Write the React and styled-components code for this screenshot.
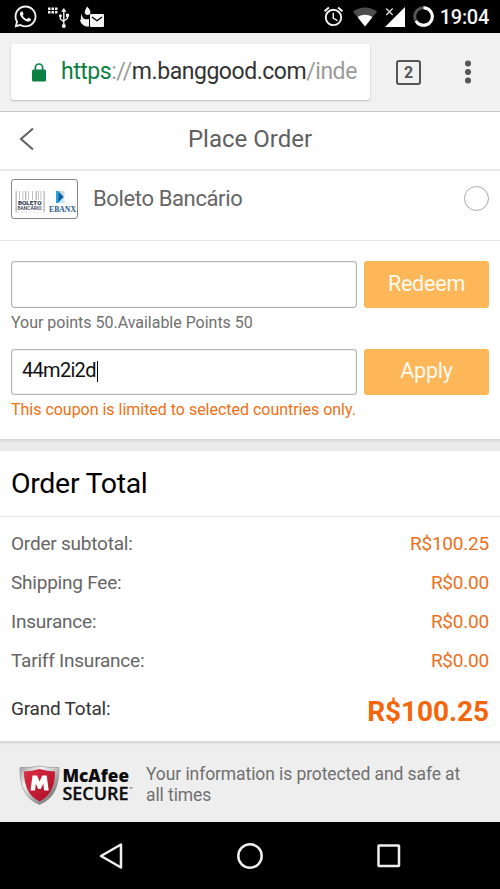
import React from 'react'
import styled, { createGlobalStyle, css } from 'styled-components'
import { FaWhatsapp } from 'react-icons/fa'
import { MdAlarm } from 'react-icons/md'

const GlobalStyle = createGlobalStyle`
  * {
    box-sizing: border-box;
  }
  body {
    margin: 0;
    background: #000;
    font-family: Roboto, sans-serif;
    color: #666;
  }
  svg {
    display: block;
    flex-shrink: 0;
  }
`
const Screen = styled.div`
  width: 500px;
  height: 889px;
  overflow: hidden;
  display: flex;
  flex-direction: column;
`
const bar = css`
  display: flex;
  align-items: center;
  flex-shrink: 0;
`

const StatusBar = styled.div`
  ${bar}
  height: 33px;
  padding: 0 11px 0 13px;
  background: #000;
  color: #f4f4f4;
`
const StatusIcon = styled.span`
  display: flex;
  margin-left: ${p => p.$gap || 0}px;
`
const Clock = styled.span`
  margin-left: auto;
  padding-top: 2px;
  font-size: 20px;
  font-weight: 500;
  line-height: 31px;
  letter-spacing: -0.3px;
`

const BrowserBar = styled.div`
  ${bar}
  height: 79px;
  padding: 0 11px;
  background: #f1f1f1;
  border-bottom: 1px solid #c6c6c6;
`
const AddressBox = styled.div`
  ${bar}
  width: 359px;
  height: 56px;
  padding-left: 21px;
  background: #fff;
  border-radius: 3px;
  box-shadow: 0 1px 2px rgba(0, 0, 0, 0.22);
`
const Url = styled.span`
  margin-left: 15px;
  font-size: 23px;
  line-height: 30px;
  letter-spacing: -0.46px;
  white-space: nowrap;
  color: #9a9a9a;

  b {
    font-weight: 400;
    color: #333;
  }
  i {
    font-style: normal;
    color: #0b8043;
  }
`
const TabCount = styled.div`
  width: 25px;
  height: 25px;
  margin-left: 26px;
  border: 2px solid #555;
  border-radius: 3px;
  font-size: 16px;
  font-weight: 700;
  line-height: 22px;
  text-align: center;
  color: #555;
`
const MenuDots = styled.svg`
  margin-left: 44px;
`

const PageHeader = styled.header`
  display: grid;
  grid-template-columns: 40px auto 40px;
  align-items: center;
  flex-shrink: 0;
  height: 59px;
  padding: 0 10px 3px;
  background: #fff;
  border-bottom: 2px solid #e9e9e9;
`
const BackIcon = styled.svg`
  margin-left: 8px;
`
const Title = styled.h1`
  margin: 0;
  font-size: 24px;
  font-weight: 400;
  line-height: 28px;
  text-align: center;
  color: #606060;
`

const Method = styled.div`
  display: flex;
  align-items: flex-start;
  flex-shrink: 0;
  height: 70px;
  padding: 8px 11px 0;
  background: #fff;
  border-bottom: 1px solid #e6e6e6;
`
const MethodLogo = styled.div`
  width: 67px;
  height: 40px;
  border: 1px solid #858585;
  border-radius: 3px;
`
const MethodName = styled.span`
  margin: 6px auto 0 15px;
  font-size: 22px;
  line-height: 28px;
  letter-spacing: -0.37px;
`
const Radio = styled.span`
  width: 25px;
  height: 25px;
  margin-top: 7px;
  border: 1px solid #aaa;
  border-radius: 50%;
`

const Form = styled.section`
  flex-shrink: 0;
  height: 198px;
  padding: 20px 11px 0;
  background: #fff;
`
const Field = styled.div`
  display: grid;
  grid-template-columns: 346px 125px;
  gap: 7px;
  height: ${p => p.$height}px;
`
const Input = styled.div`
  ${bar}
  padding: 0 0 4px 10px;
  border: 1px solid #b0b0b0;
  border-radius: 3px;
  box-shadow: inset 0 0 1px #999;
  font-size: 20px;
  letter-spacing: -0.7px;
  color: #111;
`
const Caret = styled.span`
  width: 1px;
  height: 21px;
  margin: 3px 0 0 1px;
  background: #000;
`
const Button = styled.div`
  ${bar}
  justify-content: center;
  padding-bottom: 3px;
  border-radius: 3px;
  background: #fdb759;
  font-size: 21.5px;
  letter-spacing: -0.2px;
  color: #fffaf0;
`
const Hint = styled.p`
  margin: ${p => p.$warn ? '5px 0 0' : '5px 0 16px'};
  font-size: 16px;
  line-height: 20px;
  letter-spacing: -0.02px;
  color: ${p => p.$warn ? '#f07014' : '#707070'};
`

const Divider = styled.div`
  flex-shrink: 0;
  height: 12px;
  background: linear-gradient(#d4d4d4, #ebebeb 4px);
`
const Heading = styled.h2`
  flex-shrink: 0;
  height: 66px;
  margin: 0;
  padding: 0 11px;
  border-bottom: 1px solid #e6e6e6;
  background: #fff;
  font-size: 28.5px;
  font-weight: 400;
  line-height: 65px;
  letter-spacing: -0.32px;
  color: #000;
`
const Totals = styled.section`
  flex-shrink: 0;
  height: 224px;
  padding: 7px 11px 0;
  background: #fff;
`
const Row = styled.div`
  display: flex;
  justify-content: space-between;
  align-items: center;
  height: 39px;
  font-size: 19px;
  letter-spacing: -0.22px;
`
const Price = styled.span`
  color: #ec701d;
`
const GrandRow = styled(Row)`
  height: 61px;
  padding-bottom: 4px;
  color: #333;

  ${Price} {
    padding-top: 5px;
    font-size: 28px;
    font-weight: 700;
    letter-spacing: -0.08px;
    color: #f5650c;
  }
`

const Footer = styled.footer`
  display: flex;
  flex-shrink: 0;
  height: 81px;
  padding: 0 20px 0 19px;
  background: linear-gradient(#d4d4d4, #eee 4px);
`
const FooterText = styled.p`
  width: 330px;
  margin: 23px 0 0 11px;
  font-size: 17.5px;
  line-height: 21px;
  letter-spacing: -0.09px;
  color: #707070;
`
const McAfee = styled.svg`
  margin-top: 22px;
`

const NavBar = styled.nav`
  ${bar}
  justify-content: space-between;
  height: 67px;
  padding: 0 98px;
  background: #000;
`

const rows = [
  ['Order subtotal:', 'R$100.25'],
  ['Shipping Fee:', 'R$0.00'],
  ['Insurance:', 'R$0.00'],
  ['Tariff Insurance:', 'R$0.00'],
]

const barcode = [15.5, 19, 22.5, 25, 28, 32, 35.5, 38, 40.5, 43.5]

const UsbIcon = () => (
  <svg width="22" height="23" viewBox="48 5 22 23" fill="#f4f4f4">
    {[48, 51.5, 55].map(x => [7.5, 11].map(y => (
      <rect key={x + '-' + y} x={x} y={y} width="2.5" height="2.5" />
    )))}
    <path d="M63.8 8l2.6 3.8h-5.2z" />
    <circle cx="63.8" cy="26" r="2" />
    <circle cx="60.4" cy="15.7" r="1.5" />
    <rect x="66" y="13.8" width="3" height="3" />
    <path d="M63.8 11v14M60.4 16v3l3.4 2.6M67.5 16v2.2l-3.7 2.8" fill="none" stroke="#f4f4f4" strokeWidth="1.4" />
  </svg>
)

const MailIcon = () => (
  <svg width="24" height="22" viewBox="80 6 24 22" fill="#f4f4f4">
    <path d="M87 6.500c2.500 2.200 4.200 4.500 3.200 7-.8 1.800-3.800 2-5 .2-1.200-2 .3-4 1.800-7.200z" />
    <path d="M81.500 13.500c.5 5 3 6.500 7.500 5.500v7.500c-5 .5-9-3-9-7.500 .6 1 1 1.200 1.300.9-.6-2-.5-4 .2-6.400z" />
    <rect x="90" y="14" width="14" height="13" rx="1" />
    <path d="M92 17l5 3.700 5-3.700" fill="none" stroke="#000" strokeWidth="1.4" />
  </svg>
)

const WifiIcon = () => (
  <svg width="24" height="20" viewBox="0 0 24 20">
    <path d="M0 4.500Q12-3.500 24 4.500L12 19.500z" fill="#4d4d4d" />
    <path d="M4.500 10Q12 5.500 19.500 10L12 19.500z" fill="#fff" />
  </svg>
)

const SignalIcon = () => (
  <svg width="21" height="20" viewBox="0 0 21 20">
    <path d="M20 0v20H0z" fill="#fff" />
    <path d="M0 0h10v9H0z" fill="#000" />
    <path d="M1.200 1.500l6.500 6.500M7.700 1.500L1.200 8" stroke="#ddd" strokeWidth="1.3" />
  </svg>
)

const BatteryIcon = () => (
  <svg width="21" height="21" viewBox="0 0 21 21" fill="none" strokeWidth="3">
    <circle cx="10.5" cy="10.5" r="8.8" stroke="#555" />
    <path d="M10.500 1.700a8.800 8.800 0 1 1-7.600 13.200" stroke="#fff" />
  </svg>
)

const LockIcon = () => (
  <svg width="14" height="19" viewBox="0 0 14 19">
    <rect y="6.5" width="14" height="12" rx="1.5" fill="#0b8043" />
    <path d="M3.400 7V4.600a3.600 3.600 0 0 1 7.200 0V7" fill="none" stroke="#0b8043" strokeWidth="1.7" />
  </svg>
)

const BoletoLogo = () => (
  <svg width="65" height="38" viewBox="12 180 65 38">
    {barcode.map((x, i) => (
      <rect key={x} x={x} y="191" width={i % 3 ? 0.8 : 1.3} height={i === 0 || i === 9 ? 21.5 : 9} fill="#b5b5ba" />
    ))}
    <g fontFamily="Roboto, sans-serif" fill="#34364d">
      <text x="18" y="205" fontSize="5.8" fontWeight="900" textLength="23.5" lengthAdjust="spacingAndGlyphs">BOLETO</text>
      <text x="17.5" y="210.3" fontSize="4.6" fontWeight="500" textLength="24" lengthAdjust="spacingAndGlyphs">BANCÁRIO</text>
    </g>
    <path d="M18 212h23" stroke="#c4c4c8" strokeWidth="1.2" strokeDasharray="1 3" />
    <path d="M56 191h3l5 6-5 6h-3z" fill="#28a5d8" />
    <path d="M59 191h5.500v6z" fill="#cfd4d8" />
    <path d="M58.500 203l5-6 1.500 6z" fill="#c9e5ee" />
    <path d="M58.500 192.500l5 4.500-5 4.500z" fill="#155a99" />
    <text x="49" y="211.5" fontFamily="Liberation Serif, serif" fontSize="8.8" fontWeight="700" fill="#2a5a90" textLength="27" lengthAdjust="spacingAndGlyphs">EBANX</text>
  </svg>
)

const McAfeeLogo = () => (
  <McAfee width="116" height="44" viewBox="19 763 116 44">
    <defs>
      <linearGradient id="rim" x1="0" y1="0" x2="1" y2="1">
        <stop offset="0" stopColor="#999" />
        <stop offset="0.3" stopColor="#f4f4f4" />
        <stop offset="0.6" stopColor="#aaa" />
        <stop offset="1" stopColor="#555" />
      </linearGradient>
      <linearGradient id="shield" x1="0" y1="0" x2="1" y2="1">
        <stop offset="0" stopColor="#dc3045" />
        <stop offset="1" stopColor="#ab0a25" />
      </linearGradient>
    </defs>
    <path d="M20 767.500Q30 768 39.500 766Q49 768 59 767.500C59 787 54 798.500 39.500 804.500C25 798.500 20 787 20 767.500z" fill="url(#rim)" stroke="#888" strokeWidth="0.6" />
    <path d="M24 771.500Q32 771 39.500 769Q47 771 55 771.500C55 787 50 796 39.500 801.500C29 796 24 787 24 771.500z" fill="url(#shield)" />
    <path d="M30.500 790.500L32.500 775.500h4.500l2.600 6 2.600-6h4.500l2 15h-4.600l-.8-7-2.500 5.500h-2.600l-2.400-5.500-.8 7z" fill="#fff" />
    <g fontFamily="Open Sans, sans-serif" fill="#0c0c0c">
      <text x="62.5" y="782.3" fontSize="17.5" fontWeight="800" textLength="66.5" lengthAdjust="spacingAndGlyphs">McAfee</text>
      <text x="62.5" y="800" fontSize="17.5" fontWeight="600" stroke="#0c0c0c" strokeWidth="0.3" textLength="66" lengthAdjust="spacingAndGlyphs">SECURE</text>
      <text x="129.5" y="790" fontSize="4">™</text>
    </g>
  </McAfee>
)

export default function App() {
  return (
    <Screen>
      <GlobalStyle />
      <StatusBar>
        <StatusIcon><FaWhatsapp size={25} /></StatusIcon>
        <StatusIcon $gap={10}><UsbIcon /></StatusIcon>
        <StatusIcon $gap={10}><MailIcon /></StatusIcon>
        <StatusIcon $gap={218}><MdAlarm size={23} /></StatusIcon>
        <StatusIcon $gap={8}><WifiIcon /></StatusIcon>
        <StatusIcon $gap={8}><SignalIcon /></StatusIcon>
        <StatusIcon $gap={7}><BatteryIcon /></StatusIcon>
        <Clock>19:04</Clock>
      </StatusBar>

      <BrowserBar>
        <AddressBox>
          <LockIcon />
          <Url><i>https</i>://<b>m.banggood.com</b>/inde</Url>
        </AddressBox>
        <TabCount>2</TabCount>
        <MenuDots width="6" height="24" viewBox="0 0 6 24" fill="#555">
          <circle cx="3" cy="3.5" r="3" />
          <circle cx="3" cy="12" r="3" />
          <circle cx="3" cy="20.5" r="3" />
        </MenuDots>
      </BrowserBar>

      <PageHeader>
        <BackIcon width="18" height="24" viewBox="0 0 18 24">
          <path d="M15 1.500L3 12l12 10.500" fill="none" stroke="#666" strokeWidth="2.2" />
        </BackIcon>
        <Title>Place Order</Title>
      </PageHeader>

      <Method>
        <MethodLogo><BoletoLogo /></MethodLogo>
        <MethodName>Boleto Bancário</MethodName>
        <Radio />
      </Method>

      <Form>
        <Field $height={47}>
          <Input />
          <Button>Redeem</Button>
        </Field>
        <Hint>Your points 50.Available Points 50</Hint>
        <Field $height={46}>
          <Input>44m2i2d<Caret /></Input>
          <Button>Apply</Button>
        </Field>
        <Hint $warn>This coupon is limited to selected countries only.</Hint>
      </Form>

      <Divider />
      <Heading>Order Total</Heading>
      <Totals>
        {rows.map(([label, price]) => (
          <Row key={label}>
            <span>{label}</span>
            <Price>{price}</Price>
          </Row>
        ))}
        <GrandRow>
          <span>Grand Total:</span>
          <Price>R$100.25</Price>
        </GrandRow>
      </Totals>

      <Footer>
        <McAfeeLogo />
        <FooterText>Your information is protected and safe at all times</FooterText>
      </Footer>

      <NavBar>
        <svg width="26" height="28" viewBox="0 0 26 28">
          <path d="M23 2.500v23L3 14z" fill="none" stroke="#eee" strokeWidth="2.5" strokeLinejoin="round" />
        </svg>
        <svg width="28" height="28" viewBox="0 0 28 28">
          <circle cx="14" cy="14" r="11.7" fill="none" stroke="#eee" strokeWidth="2.5" />
        </svg>
        <svg width="26" height="26" viewBox="0 0 26 26">
          <rect x="2.5" y="2.5" width="20.5" height="20.5" rx="0.5" fill="none" stroke="#eee" strokeWidth="2.5" />
        </svg>
      </NavBar>
    </Screen>
  )
}
